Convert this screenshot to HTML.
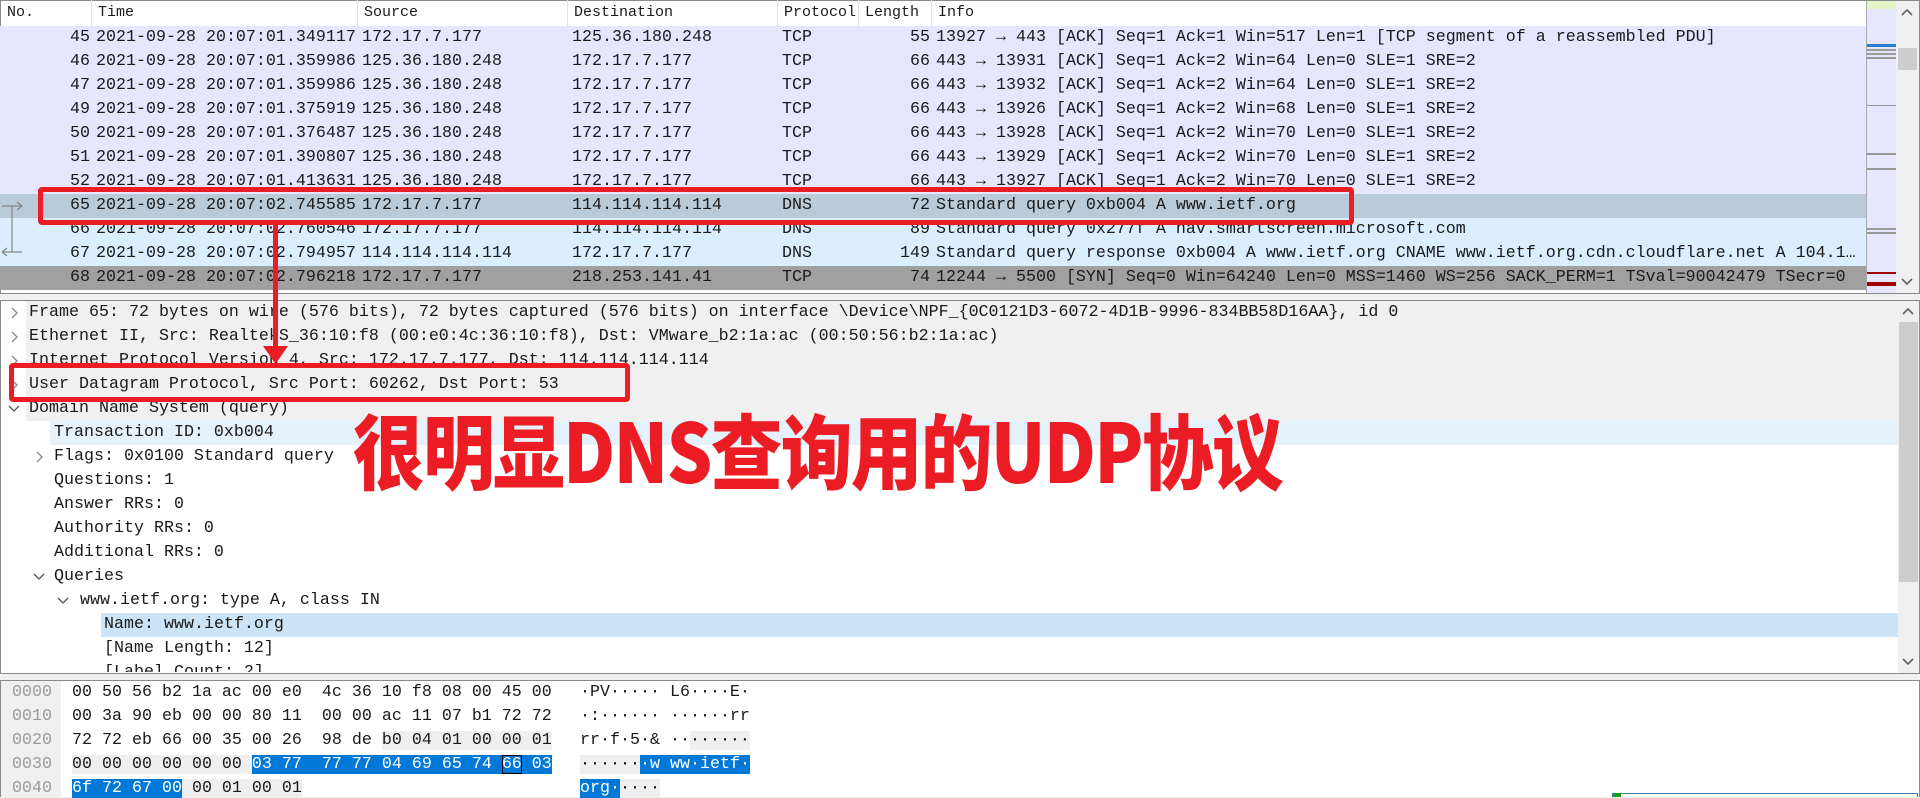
<!DOCTYPE html>
<html><head><meta charset="utf-8"><style>
*{margin:0;padding:0;box-sizing:border-box}
body{width:1920px;height:797px;overflow:hidden;background:#f0f0f0;position:relative;font-family:"Liberation Mono",monospace;font-size:16.667px;color:#1a1a1a}
.a{position:absolute;white-space:pre}
.row{position:absolute;left:0;width:1866px;height:24px}
.t{position:absolute;top:3px;white-space:pre;line-height:18px}
.r{text-align:right}
.hd{position:absolute;top:0;height:26px;border-right:1px solid #e4e4e4;padding-left:6px;line-height:26px;font-size:15px}
.g{background:#efefef}.b{background:#0078d7;color:#fff}
</style></head><body>
<div class="a" style="left:0;top:0;width:1920px;height:294px;background:#fff;border:1px solid #8a8a8a"></div>
<div class="hd" style="left:1px;width:91px">No.</div>
<div class="hd" style="left:92px;width:266px">Time</div>
<div class="hd" style="left:358px;width:210px">Source</div>
<div class="hd" style="left:568px;width:210px">Destination</div>
<div class="hd" style="left:778px;width:81px">Protocol</div>
<div class="hd" style="left:859px;width:73px">Length</div>
<div class="hd" style="left:932px;width:934px;border:none">Info</div>

<div id="pl"></div>
<div class="a" style="left:1866px;top:1px;width:30px;height:292px;background:#e7e6ff;border-left:1px solid #aaa"></div>
<div class="a" style="left:1867px;top:1px;width:29px;height:8px;background:#e4f5c9"></div>
<div class="a" style="left:1867px;top:44px;width:29px;height:3px;background:#2a7fd0"></div>
<div class="a" style="left:1867px;top:49px;width:29px;height:2px;background:#999"></div>
<div class="a" style="left:1867px;top:53px;width:29px;height:2px;background:#999"></div>
<div class="a" style="left:1867px;top:57px;width:29px;height:2px;background:#999"></div>
<div class="a" style="left:1867px;top:105px;width:29px;height:1px;background:#999"></div>
<div class="a" style="left:1867px;top:153px;width:29px;height:2px;background:#999"></div>
<div class="a" style="left:1867px;top:168px;width:29px;height:2px;background:#999"></div>
<div class="a" style="left:1867px;top:228px;width:29px;height:2px;background:#999"></div>
<div class="a" style="left:1867px;top:232px;width:29px;height:2px;background:#999"></div>
<div class="a" style="left:1867px;top:272px;width:29px;height:2px;background:#a00000"></div>
<div class="a" style="left:1867px;top:282px;width:29px;height:4px;background:#a00000"></div>
<div class="a" style="left:1896px;top:1px;width:23px;height:292px;background:#f0f0f0"></div>
<div class="a" style="left:1898px;top:48px;width:19px;height:22px;background:#cdcdcd"></div>
<svg class="a" style="left:1899px;top:6px" width="16" height="12"><path d="M3 9L8 4L13 9" stroke="#606060" stroke-width="1.6" fill="none"/></svg>
<svg class="a" style="left:1899px;top:276px" width="16" height="12"><path d="M3 3L8 8L13 3" stroke="#606060" stroke-width="1.6" fill="none"/></svg>

<div class="a" style="left:0;top:300px;width:1920px;height:374px;background:#fff;border:1px solid #8a8a8a"></div>
<div class="a" style="left:1898px;top:301px;width:21px;height:372px;background:#f0f0f0"></div>
<div class="a" style="left:1899px;top:322px;width:19px;height:260px;background:#cdcdcd"></div>
<svg class="a" style="left:1900px;top:305px" width="16" height="12"><path d="M3 9L8 4L13 9" stroke="#606060" stroke-width="1.6" fill="none"/></svg>
<svg class="a" style="left:1900px;top:656px" width="16" height="12"><path d="M3 3L8 8L13 3" stroke="#606060" stroke-width="1.6" fill="none"/></svg>
<div class="a" style="left:26px;top:301px;width:1872px;height:120px;background:#f0f0f0"></div>
<div class="a" style="left:50px;top:421px;width:1848px;height:24px;background:#e5f1fb"></div>
<div class="a" style="left:101px;top:613px;width:1797px;height:24px;background:#cce4f7"></div>
<div id="dt"></div>

<div class="a" style="left:0;top:680px;width:1920px;height:117px;background:#fff;border:1px solid #8a8a8a;border-bottom:none"></div>
<div class="a" style="left:1px;top:681px;width:60px;height:116px;background:#f0f0f0"></div>
<div id="hx"></div>
<div class="a" style="left:1612px;top:793px;width:306px;height:4px;border:1px solid #3b78b0;border-bottom:none"></div>
<div class="a" style="left:1613px;top:793px;width:8px;height:4px;background:#1aa01a"></div>

<div class="a" style="left:38px;top:187px;width:1316px;height:38px;border:5px solid #ec1c24;border-radius:4px"></div>
<div class="a" style="left:9px;top:363px;width:621px;height:39px;border:5px solid #ec1c24;border-radius:4px"></div>
<div class="a" style="left:273px;top:224px;width:5px;height:126px;background:#ec1c24"></div>
<svg class="a" style="left:263px;top:346px" width="26" height="20"><path d="M0 0L25 0L12.5 18Z" fill="#ec1c24"/></svg>
<div class="a" style="left:353px;top:396px;font-family:'Noto Sans CJK SC',sans-serif;font-weight:900;font-size:82px;line-height:104px;color:#ec1c24;transform:scaleX(0.875);transform-origin:0 0;letter-spacing:-2px">很明显DNS查询用的UDP协议</div>

<script>
var rows=[
["45","2021-09-28 20:07:01.349117","172.17.7.177","125.36.180.248","TCP","55","13927 → 443 [ACK] Seq=1 Ack=1 Win=517 Len=1 [TCP segment of a reassembled PDU]","#e7e6ff"],
["46","2021-09-28 20:07:01.359986","125.36.180.248","172.17.7.177","TCP","66","443 → 13931 [ACK] Seq=1 Ack=2 Win=64 Len=0 SLE=1 SRE=2","#e7e6ff"],
["47","2021-09-28 20:07:01.359986","125.36.180.248","172.17.7.177","TCP","66","443 → 13932 [ACK] Seq=1 Ack=2 Win=64 Len=0 SLE=1 SRE=2","#e7e6ff"],
["49","2021-09-28 20:07:01.375919","125.36.180.248","172.17.7.177","TCP","66","443 → 13926 [ACK] Seq=1 Ack=2 Win=68 Len=0 SLE=1 SRE=2","#e7e6ff"],
["50","2021-09-28 20:07:01.376487","125.36.180.248","172.17.7.177","TCP","66","443 → 13928 [ACK] Seq=1 Ack=2 Win=70 Len=0 SLE=1 SRE=2","#e7e6ff"],
["51","2021-09-28 20:07:01.390807","125.36.180.248","172.17.7.177","TCP","66","443 → 13929 [ACK] Seq=1 Ack=2 Win=70 Len=0 SLE=1 SRE=2","#e7e6ff"],
["52","2021-09-28 20:07:01.413631","125.36.180.248","172.17.7.177","TCP","66","443 → 13927 [ACK] Seq=1 Ack=2 Win=70 Len=0 SLE=1 SRE=2","#e7e6ff"],
["65","2021-09-28 20:07:02.745585","172.17.7.177","114.114.114.114","DNS","72","Standard query 0xb004 A www.ietf.org","#b9cbd8"],
["66","2021-09-28 20:07:02.760546","172.17.7.177","114.114.114.114","DNS","89","Standard query 0x277f A nav.smartscreen.microsoft.com","#daeeff"],
["67","2021-09-28 20:07:02.794957","114.114.114.114","172.17.7.177","DNS","149","Standard query response 0xb004 A www.ietf.org CNAME www.ietf.org.cdn.cloudflare.net A 104.1…","#daeeff"],
["68","2021-09-28 20:07:02.796218","172.17.7.177","218.253.141.41","TCP","74","12244 → 5500 [SYN] Seq=0 Win=64240 Len=0 MSS=1460 WS=256 SACK_PERM=1 TSval=90042479 TSecr=0","#a0a0a0"]];
var h="";
rows.forEach(function(r,i){var y=26+i*24;
h+='<div class="row" style="top:'+y+'px;background:'+r[7]+'">'+
'<div class="t r" style="left:0;width:90px">'+r[0]+'</div>'+
'<div class="t" style="left:96px">'+r[1]+'</div>'+
'<div class="t" style="left:362px">'+r[2]+'</div>'+
'<div class="t" style="left:572px">'+r[3]+'</div>'+
'<div class="t" style="left:782px">'+r[4]+'</div>'+
'<div class="t r" style="left:859px;width:71px">'+r[5]+'</div>'+
'<div class="t" style="left:936px">'+r[6]+'</div></div>';});
h+='<svg class="a" style="left:0;top:190px" width="26" height="72"><path d="M2 16H22M17 12L22 16L17 20M12 16V62M12 62H22M2 62L7 58M2 62L7 66M2 62H12" stroke="#888" stroke-width="1.2" fill="none"/></svg>';
document.getElementById("pl").innerHTML=h;

var d=[[0,"Frame 65: 72 bytes on wire (576 bits), 72 bytes captured (576 bits) on interface \\Device\\NPF_{0C0121D3-6072-4D1B-9996-834BB58D16AA}, id 0","r"],
[0,"Ethernet II, Src: RealtekS_36:10:f8 (00:e0:4c:36:10:f8), Dst: VMware_b2:1a:ac (00:50:56:b2:1a:ac)","r"],
[0,"Internet Protocol Version 4, Src: 172.17.7.177, Dst: 114.114.114.114","r"],
[0,"User Datagram Protocol, Src Port: 60262, Dst Port: 53","r"],
[0,"Domain Name System (query)","d"],
[1,"Transaction ID: 0xb004",""],[1,"Flags: 0x0100 Standard query","r"],[1,"Questions: 1",""],[1,"Answer RRs: 0",""],
[1,"Authority RRs: 0",""],[1,"Additional RRs: 0",""],[1,"Queries","d"],[2,"www.ietf.org: type A, class IN","d"],
[3,"Name: www.ietf.org",""],[3,"[Name Length: 12]",""],[3,"[Label Count: 2]",""]];
var tx=[29,54,80,104],ax=[7,32,56,80];h="";
d.forEach(function(e,i){var y=301+i*24;
h+='<div class="t" style="left:'+tx[e[0]]+'px;top:'+(y+3)+'px;'+(i==15?'clip-path:inset(0 0 10px 0)':'')+'">'+e[1]+'</div>';
if(e[2]=="r")h+='<svg class="a" style="left:'+ax[e[0]]+'px;top:'+(y+5)+'px" width="14" height="14"><path d="M5 2L10 7L5 12" stroke="#888" stroke-width="1.3" fill="none"/></svg>';
if(e[2]=="d")h+='<svg class="a" style="left:'+ax[e[0]]+'px;top:'+(y+5)+'px" width="14" height="14"><path d="M2 4L7 9L12 4" stroke="#555" stroke-width="1.3" fill="none"/></svg>';});
document.getElementById("dt").innerHTML=h;

var hx=[
['0000','00 50 56 b2 1a ac 00 e0  4c 36 10 f8 08 00 45 00','·PV····· L6····E·'],
['0010','00 3a 90 eb 00 00 80 11  00 00 ac 11 07 b1 72 72','·:······ ······rr'],
['0020','72 72 eb 66 00 35 00 26  98 de <span class="g">b0 04 01 00 00 01</span>','rr·f·5·& ··<span class="g">······</span>'],
['0030','<span class="g">00 00 00 00 00 00 </span><span class="b">03 77  77 77 04 69 65 74 <span style="outline:1px solid #000;outline-offset:-1px">66</span> 03</span>','<span class="g">······</span><span class="b">·w ww·ietf·</span>'],
['0040','<span class="b">6f 72 67 00</span><span class="g"> 00 01 00 01</span>','<span class="b">org·</span><span class="g">····</span>']];
h="";
hx.forEach(function(e,i){var y=681+i*24;
h+='<div class="t" style="left:12px;top:'+(y+3)+'px;color:#9a9a9a">'+e[0]+'</div>';
h+='<div class="t" style="left:72px;top:'+(y+3)+'px">'+e[1]+'</div>';
h+='<div class="t" style="left:580px;top:'+(y+3)+'px">'+e[2]+'</div>';});
document.getElementById("hx").innerHTML=h;
</script>
</body></html>
